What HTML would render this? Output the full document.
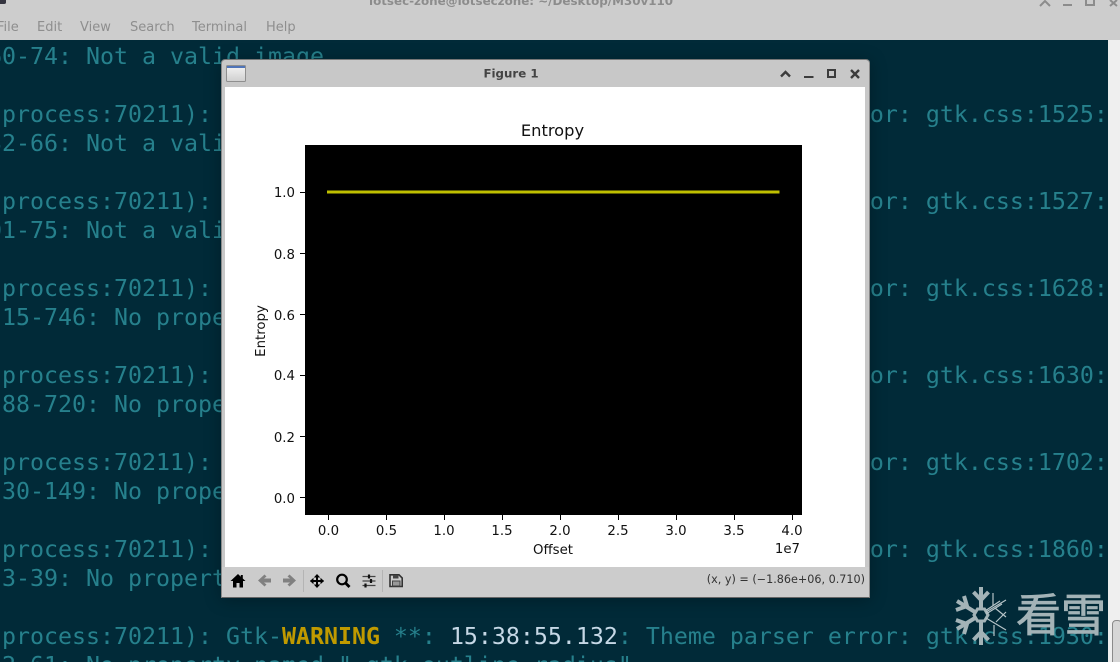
<!DOCTYPE html>
<html><head><meta charset="utf-8">
<style>
html,body{margin:0;padding:0;width:1120px;height:662px;overflow:hidden;background:#012a38}
body{position:relative}
.hdr{position:absolute;left:0;top:0;width:1120px;height:40px;background:#cdcdcd;font-family:"DejaVu Sans",sans-serif}
.ttl{position:absolute;left:369px;top:-6px;font-size:11.9px;font-weight:bold;color:#8c8c8c;white-space:nowrap}
.m{position:absolute;top:20px;font-size:13px;color:#8e8e8e;white-space:nowrap;line-height:16px}
.term{position:absolute;left:0;top:40px;width:1108px;height:622px;background:#012a38;overflow:hidden}
.term pre{position:absolute;left:-12px;top:2px;margin:0;font-family:"DejaVu Sans Mono",monospace;font-size:23.25px;line-height:29px;color:#26808c}
.w{color:#c09a00;font-weight:bold}.t{color:#c6d8e6}
.sb{position:absolute;left:1108px;top:40px;width:12px;height:622px;background:#efefef}
.th{position:absolute;left:1112px;top:620px;width:10px;height:50px;background:#d6d6d6;border:1px solid #8a8a8a;border-radius:4px;box-sizing:border-box}
.shadow{position:absolute;left:221px;top:59px;width:649px;height:539px;box-shadow:0 2px 16px rgba(0,0,0,.28)}
.fig{position:absolute;left:221px;top:59px;width:649px;height:539px;background:#c8c8c8;border-radius:4px 4px 0 0;box-sizing:border-box;border-top:1px solid #777;border-left:1px solid #8a8a8a;border-right:1px solid #8a8a8a;border-bottom:1px solid #666}
.wm{position:absolute;left:0;top:0;pointer-events:none}
</style></head><body>
<div class="hdr">
<div class="ttl">lotsec-zone@lotseczone: ~/Desktop/M30v110</div>
<div class="m" style="left:-3px">File</div><div class="m" style="left:37px">Edit</div><div class="m" style="left:80px">View</div><div class="m" style="left:130px">Search</div><div class="m" style="left:192px">Terminal</div><div class="m" style="left:266px">Help</div>
<svg style="position:absolute;left:0;top:0" width="1120" height="40"><path d="M0 0H6V2.500Q6 4 4 4H0Z" fill="#34343f"/><g fill="none" stroke="#8c8c8c" stroke-width="2"><path d="M1040 6L1045 1 1050 6M1063 5H1072M1086 0V5H1094V0M1110 0L1117 6M1117 0L1110 6"/></g></svg>
</div>
<div class="term"><pre>60-74: Not a valid image

 process:70211): Gtk-<span class="w">WARNING</span> **: <span class="t">15:38:52.132</span>: Theme parser error: gtk.css:1525:
32-66: Not a valid image

 process:70211): Gtk-<span class="w">WARNING</span> **: <span class="t">15:38:52.132</span>: Theme parser error: gtk.css:1527:
01-75: Not a valid image

 process:70211): Gtk-<span class="w">WARNING</span> **: <span class="t">15:38:52.132</span>: Theme parser error: gtk.css:1628:
 15-746: No property named "-gtk-outline-radius"

 process:70211): Gtk-<span class="w">WARNING</span> **: <span class="t">15:38:52.132</span>: Theme parser error: gtk.css:1630:
 88-720: No property named "-gtk-outline-radius"

 process:70211): Gtk-<span class="w">WARNING</span> **: <span class="t">15:38:52.132</span>: Theme parser error: gtk.css:1702:
 30-149: No property named "-gtk-outline-radius"

 process:70211): Gtk-<span class="w">WARNING</span> **: <span class="t">15:38:52.132</span>: Theme parser error: gtk.css:1860:
 3-39: No property named "-gtk-outline-radius"

 process:70211): Gtk-<span class="w">WARNING</span> **: <span class="t">15:38:55.132</span>: Theme parser error: gtk.css:1930:
 2-61: No property named "-gtk-outline-radius"</pre></div>
<div class="sb"></div><div class="th"></div>
<div class="shadow"></div>
<div class="fig"></div>
<svg class="wm" width="1120" height="662" font-family="'DejaVu Sans',sans-serif">
<defs><linearGradient id="g" x1="0" y1="0" x2="0" y2="1"><stop offset="0" stop-color="#f4f4f4"/><stop offset="1" stop-color="#cfcfcf"/></linearGradient></defs>
<rect x="226.500" y="65.500" width="19" height="16" rx="1" fill="url(#g)" stroke="#8f8f8f"/>
<rect x="227" y="66" width="18" height="2" fill="#4f74b8"/>
<text x="511" y="77.500" text-anchor="middle" font-size="11.800" font-weight="bold" fill="#444">Figure 1</text>
<!-- window controls -->
<path d="M781 76.500L785.500 72 790 76.500" fill="none" stroke="#3c3c3c" stroke-width="2.400"/>
<rect x="804" y="76" width="9.500" height="2" fill="#3c3c3c"/>
<rect x="828" y="70" width="7" height="7" fill="none" stroke="#3c3c3c" stroke-width="2"/>
<path d="M851 70L859 78M859 70L851 78" stroke="#3c3c3c" stroke-width="2.400" fill="none"/>
<!-- figure content -->
<rect x="225" y="87" width="640" height="480" fill="#fff"/>
<rect x="222" y="567" width="647" height="30" fill="#cccccc"/>
<rect x="305" y="145" width="497" height="370" fill="#000"/>
<path d="M327 192H779.500" stroke="#bfbf00" stroke-width="3"/>
<g stroke="#000" stroke-width="1">
<path d="M300 192.500H305M300 253.500H305M300 314.500H305M300 375.500H305M300 436.500H305M300 497.500H305"/>
<path d="M328.500 515V520M386.500 515V520M444.500 515V520M502.500 515V520M560.500 515V520M618.500 515V520M676.500 515V520M734.500 515V520M792.500 515V520"/>
</g>
<g font-size="13.300" fill="#111" text-anchor="end">
<text x="295" y="197">1.0</text><text x="295" y="259">0.8</text><text x="295" y="320">0.6</text><text x="295" y="380">0.4</text><text x="295" y="442">0.2</text><text x="295" y="503">0.0</text>
</g>
<g font-size="13.300" fill="#111" text-anchor="middle">
<text x="328.500" y="535">0.0</text><text x="386.500" y="535">0.5</text><text x="444" y="535">1.0</text><text x="502" y="535">1.5</text><text x="560" y="535">2.0</text><text x="618" y="535">2.5</text><text x="676" y="535">3.0</text><text x="734" y="535">3.5</text><text x="792" y="535">4.0</text>
<text x="553" y="554">Offset</text>
<text x="0" y="0" transform="translate(265,331) rotate(-90)">Entropy</text>
</g>
<text x="800" y="553" font-size="13.300" fill="#111" text-anchor="end">1e7</text>
<text x="552.500" y="136" font-size="16.300" fill="#111" text-anchor="middle">Entropy</text>
<!-- toolbar -->
<path d="M238 574L230.500 581H233V587.500H236.500V583H239.500V587.500H243V581H245.500L242.800 578.500V575H240.800V576.700Z" fill="#000"/>
<path d="M258 580.500L264.500 574.500 266.500 576.500 264 578.500H271V582.500H264L266.500 584.500 264.500 586.500Z" fill="#808080"/>
<path d="M296 580.500L289.500 574.500 287.500 576.500 290 578.500H283V582.500H290L287.500 584.500 289.500 586.500Z" fill="#808080"/>
<path d="M310.500 581H323.500M317 575V587" stroke="#000" stroke-width="2"/>
<path d="M317 574L313.800 577.500H320.200ZM317 588L313.800 584.500H320.200ZM310 581L313.500 577.800V584.200ZM324 581L320.500 577.800V584.200Z" fill="#000"/>
<circle cx="342" cy="579.500" r="4.800" fill="none" stroke="#000" stroke-width="2.200"/>
<path d="M345.500 583L349.500 587" stroke="#000" stroke-width="2.800"/>
<path d="M362.500 576.500H375.500M362.500 581H375.500M362.500 585.500H375.500" stroke="#444" stroke-width="1.200"/>
<path d="M369 574.500V578.500M371 579V583M365.500 583.500V587.500" stroke="#111" stroke-width="2.200"/>
<path d="M390 574.800H399L402.200 578V586.500H390Z" fill="none" stroke="#333" stroke-width="1.600"/>
<rect x="393" y="575" width="5.500" height="3.500" fill="#444"/>
<rect x="392.500" y="581" width="7.500" height="5" fill="#999" stroke="#444" stroke-width="1"/>
<path d="M303.500 570V592M382.500 570V592" stroke="#b4b4b4" stroke-width="1"/>
<text x="865" y="583" font-size="11.200" fill="#333" text-anchor="end">(x, y) = (−1.86e+06, 0.710)</text>
<!-- watermark -->
<g fill="none" stroke="#a3b3b7" stroke-linecap="butt">
<path d="M974 615L977.500 609H984.500L988 615 984.500 621H977.500Z" stroke-width="3"/>
<g stroke-width="4">
<path d="M981 609V587M973.500 592L981 600 988.500 592M981 621V645M973.500 640L981 632 988.500 640"/>
<path d="M975 612L957 601M956 610L967 606 964 596"/>
<path d="M975 618L957 629M956 620L967 624 964 634"/>
</g>
<g stroke-width="1.200" stroke="#b6c4c8">
<path d="M986 612L1006 600M993 593V606M1006 617L995 608M986 614L1002 604M986.500 610L1000 601"/>
<path d="M986 618L1006 630M994 636V625M1006 612L996 622"/>
</g>
</g>
<text x="1016" y="631" font-size="45" fill="#a3b3b7" stroke="#a3b3b7" stroke-width=".8" font-family="'Noto Sans CJK SC',sans-serif" textLength="90">看雪</text>
</svg>
</body></html>
